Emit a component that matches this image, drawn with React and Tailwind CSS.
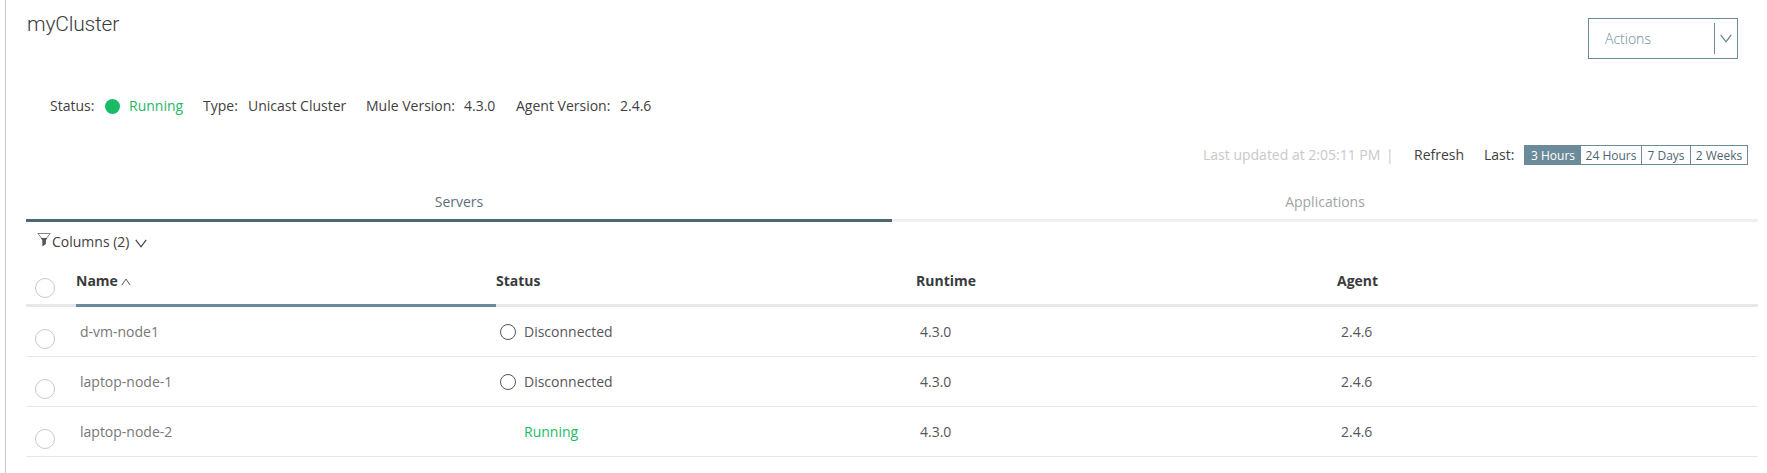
const servers = [
  { name: "d-vm-node1", status: "Disconnected", runtime: "4.3.0", agent: "2.4.6" },
  { name: "laptop-node-1", status: "Disconnected", runtime: "4.3.0", agent: "2.4.6" },
  { name: "laptop-node-2", status: "Running", runtime: "4.3.0", agent: "2.4.6" },
];

function Chevron({ className, up = false, width = 12, height = 9, strokeWidth = 1.2 }) {
  return (
    <svg className={className} width={width} height={height} viewBox="0 0 12 9" preserveAspectRatio="none" fill="none" stroke="currentColor" strokeWidth={strokeWidth}>
      <path d={up ? "M1 8 L6 1.2 L11 8" : "M0.8 0.8 L6 7.8 L11.2 0.8"} />
    </svg>
  );
}

function Funnel() {
  return (
    <svg width="14" height="14" viewBox="0 0 14 14" className="-mt-1 shrink-0">
      <path d="M0.8 0.5 H13.2 L8.5 6.5 V10.8 L5.8 12.8 V6.5 Z" fill="none" stroke="#777777" strokeWidth="0.9" />
      <path d="M3.6 5 H10.4 L8.7 7.4 V10.9 L5.6 13 V7.4 Z" fill="#555759" />
    </svg>
  );
}

function Radio() {
  return <span className="block h-5 w-5 rounded-full border border-[#c8c9ca]" />;
}

function Header() {
  return (
    <header className="flex h-[59px] items-start justify-between pt-[18px] pr-5">
      <h1 className="-mt-2 ml-px font-[Roboto] text-[21px] leading-[28px] font-light tracking-[-0.2px] text-[#3a3b3c]">myCluster</h1>
      <button className="flex h-[41px] w-[150px] items-center border border-[#6b8a9a] pl-4 text-left text-[#6b8a9a]">
        <span className="flex-1 font-light">Actions</span>
        <span className="h-[31px] w-px bg-[#6b8a9a]" />
        <Chevron className="mr-[5px] ml-[5px] text-[#5f7e8e]" />
      </button>
    </header>
  );
}

function Summary() {
  return (
    <div className="mt-[37px] flex h-5 items-center pl-6">
      <span className="w-[54px]">Status:</span>
      <span className="mr-[9px] ml-px h-[15px] w-[15px] rounded-full bg-[#1abb66]" />
      <span className="w-[74px] text-[#1fb866]">Running</span>
      <span className="w-[45px]">Type:</span>
      <span className="w-[118px]">Unicast Cluster</span>
      <span className="w-[98px]">Mule Version:</span>
      <span className="w-[52px]">4.3.0</span>
      <span className="w-[104px]">Agent Version:</span>
      <span>2.4.6</span>
    </div>
  );
}

function RangeBar() {
  return (
    <div className="mt-[29px] flex h-5 items-center justify-end pr-[10px]">
      <span className="w-[183px] text-[#c8c9ca]">Last updated at 2:05:11 PM</span>
      <span className="w-[28px] text-[#c8c9ca]">|</span>
      <span className="w-[70px]">Refresh</span>
      <span className="w-[40px]">Last:</span>
      <div className="flex h-5 w-[224px] border border-[#6b8a9a] text-center text-[12px] leading-[19px] text-[#4f6672]">
        <span className="w-[56px] bg-[#6b8a9a] text-white">3 Hours</span>
        <span className="w-[61px] border-r border-[#6b8a9a]">24 Hours</span>
        <span className="w-[49px] border-r border-[#6b8a9a]">7 Days</span>
        <span className="flex-1">2 Weeks</span>
      </div>
    </div>
  );
}

function Tabs() {
  return (
    <nav className="mt-[21px] grid h-9 grid-cols-2 text-center leading-[32px]">
      <span className="border-b-3 border-[#4f6771] text-[#5e6f7b]">Servers</span>
      <span className="border-b-3 border-[#f0f0f0] text-[#a3a4a5]">Applications</span>
    </nav>
  );
}

function ServerTable() {
  return (
    <div>
      <div className="grid h-[46px] grid-cols-[50px_420px_420px_421px_421px] leading-[40px] font-bold text-[#3a3b3c]">
        <span className="border-b-3 border-[#e6e7e9] pt-[17px] pl-[9px]"><Radio /></span>
        <span className="flex border-b-3 border-[#6b8a9a]">
          Name
          <Chevron up width={10} height={8} strokeWidth={1} className="mt-[17px] ml-[3px]" />
        </span>
        <span className="border-b-3 border-[#e6e7e9]">Status</span>
        <span className="border-b-3 border-[#e6e7e9]">Runtime</span>
        <span className="border-b-3 border-[#e6e7e9]">Agent</span>
      </div>
      {servers.map((server) => (
        <div key={server.name} className="grid h-[50px] grid-cols-[50px_420px_420px_421px_421px] border-b border-[#e6e7e9] leading-[50px] text-[#555657]">
          <span className="pt-[22px] pl-[9px]"><Radio /></span>
          <span className="pl-1 text-[#777879]">{server.name}</span>
          <span className="flex items-center pl-1">
            <span className="w-6">
              {server.status === "Disconnected" && <span className="block h-4 w-4 rounded-full border border-[#555657]" />}
            </span>
            <span className={server.status === "Running" ? "text-[#1abb66]" : ""}>{server.status}</span>
          </span>
          <span className="pl-1">{server.runtime}</span>
          <span className="pl-1">{server.agent}</span>
        </div>
      ))}
    </div>
  );
}

export default function App() {
  return (
    <div className="h-[473px] overflow-hidden bg-white pl-[5px] font-['Open_Sans',sans-serif] text-[14px] leading-5 text-[#3f4041]">
      <main className="h-full border-l border-[#c8c8ca] pr-[9px] pl-5">
        <Header />
        <Summary />
        <RangeBar />
        <Tabs />
        <div className="flex h-[39px] items-center pl-[11px]">
          <Funnel />
          <span className="ml-[1px]">Columns (2)</span>
          <Chevron className="mt-[3px] ml-[6px]" />
        </div>
        <ServerTable />
      </main>
    </div>
  );
}
